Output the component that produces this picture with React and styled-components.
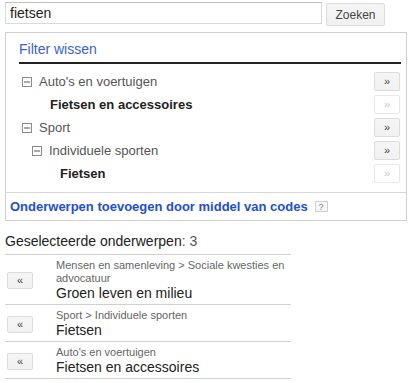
import styled, { createGlobalStyle } from "styled-components";

const GlobalStyle = createGlobalStyle`
  body {
    margin: 0;
    background: #fff;
    font-family: Arial, "Liberation Sans", sans-serif;
    color: #222;
  }
`;

const Page = styled.div`
  padding: 2px 6px 0 5px;
  width: 402px;
`;

const SearchRow = styled.div`
  display: flex;
  align-items: flex-start;
  gap: 4px;
`;

const SearchInput = styled.input`
  box-sizing: border-box;
  width: 317px;
  height: 22px;
  margin: 0;
  padding: 0 4px;
  border: 1px solid #d9d9d9;
  border-top-color: #c0c0c0;
  font: 14px Arial, "Liberation Sans", sans-serif;
  color: #222;
  outline: none;
`;

const Button = styled.button`
  box-sizing: border-box;
  width: ${(p) => p.$w || 26}px;
  height: ${(p) => p.$h || 19}px;
  margin: 0;
  padding: 0;
  border: 1px solid ${(p) => (p.$off ? "#e8e8e8" : "#dcdcdc")};
  border-radius: 2px;
  background: ${(p) => (p.$off ? "#fff" : "linear-gradient(#f5f5f5, #f1f1f1)")};
  color: ${(p) => (p.$off ? "#c8c8c8" : "#444")};
  font: ${(p) => p.$fs || 12}px Arial, "Liberation Sans", sans-serif;
  line-height: 1;
  cursor: default;
  flex-shrink: 0;
`;

const SearchButton = styled(Button)`
  margin-top: 1px;
`;

const FilterBox = styled.div`
  margin-top: 6px;
  border: 1px solid #cfcfcf;
`;

const FilterHeader = styled.div`
  margin: 0 5px 0 13px;
  padding: 7px 0 4px;
  border-bottom: 2px solid #222;
`;

const Link = styled.a`
  color: ${(p) => (p.$bold ? "#1d4fd1" : "#3a5fd9")};
  font-size: ${(p) => p.$size}px;
  font-weight: ${(p) => (p.$bold ? "bold" : "normal")};
  text-decoration: none;
  line-height: 16px;
`;

const Tree = styled.div`
  padding: 6px 6px 7px 16px;
  border-bottom: 1px solid #d6d6d6;
`;

const TreeRow = styled.div`
  display: flex;
  align-items: center;
  height: 23px;
  padding-left: ${(p) => p.$indent}px;
`;

const TreeLabel = styled.span`
  flex: 1;
  font-size: 13px;
  color: ${(p) => (p.$leaf ? "#222" : "#555")};
  font-weight: ${(p) => (p.$leaf ? "bold" : "normal")};
`;

const Toggle = styled.svg`
  width: 10px;
  height: 10px;
  margin-right: 7px;
  flex-shrink: 0;
`;

const CodesRow = styled.div`
  display: flex;
  align-items: center;
  height: 27px;
  padding-left: 4px;
  gap: 7px;
`;

const Help = styled.span`
  box-sizing: border-box;
  display: inline-flex;
  align-items: center;
  justify-content: center;
  width: 13px;
  height: 11px;
  border: 1px solid #d0d0d0;
  background: #f6f6f6;
  color: #888;
  font-size: 9px;
`;

const Heading = styled.div`
  margin-top: 12px;
  font-size: 14px;
  line-height: 16px;
  color: #222;
  span {
    color: #555;
  }
`;

const SelectedList = styled.div`
  width: 286px;
  margin-top: 5px;
  border-top: 1px solid #d0d0d0;
`;

const SelectedRow = styled.div`
  display: flex;
  align-items: center;
  gap: 23px;
  padding: 4px 0 2px 2px;
  border-bottom: 1px solid #d0d0d0;
`;

const SelectedText = styled.div`
  flex: 1;
`;

const Path = styled.div`
  font-size: 11px;
  line-height: 13px;
  color: #666;
`;

const Name = styled.div`
  font-size: 14px;
  line-height: 17px;
  color: #222;
`;

const MinusBox = () => (
  <Toggle viewBox="0 0 10 10">
    <rect x="0.5" y="0.5" width="9" height="9" fill="#fff" stroke="#8a8a8a" />
    <line x1="2" y1="5" x2="8" y2="5" stroke="#555" />
  </Toggle>
);

const tree = [
  { label: "Auto's en voertuigen", indent: 0 },
  { label: "Fietsen en accessoires", indent: 28, leaf: true },
  { label: "Sport", indent: 0 },
  { label: "Individuele sporten", indent: 10 },
  { label: "Fietsen", indent: 38, leaf: true },
];

const selected = [
  { path: "Mensen en samenleving > Sociale kwesties en advocatuur", name: "Groen leven en milieu" },
  { path: "Sport > Individuele sporten", name: "Fietsen" },
  { path: "Auto's en voertuigen", name: "Fietsen en accessoires" },
];

export default function App() {
  return (
    <Page>
      <GlobalStyle />
      <SearchRow>
        <SearchInput defaultValue="fietsen" />
        <SearchButton $w={59} $h={23}>Zoeken</SearchButton>
      </SearchRow>
      <FilterBox>
        <FilterHeader>
          <Link $size={14}>Filter wissen</Link>
        </FilterHeader>
        <Tree>
          {tree.map((t) => (
            <TreeRow key={t.label + t.indent} $indent={t.indent}>
              {!t.leaf && <MinusBox />}
              <TreeLabel $leaf={t.leaf}>{t.label}</TreeLabel>
              <Button $off={t.leaf} $fs={11}>»</Button>
            </TreeRow>
          ))}
        </Tree>
        <CodesRow>
          <Link $size={13} $bold>Onderwerpen toevoegen door middel van codes</Link>
          <Help>?</Help>
        </CodesRow>
      </FilterBox>
      <Heading>
        Geselecteerde onderwerpen<span>: 3</span>
      </Heading>
      <SelectedList>
        {selected.map((s) => (
          <SelectedRow key={s.path}>
            <Button $h={17} $fs={11}>«</Button>
            <SelectedText>
              <Path>{s.path}</Path>
              <Name>{s.name}</Name>
            </SelectedText>
          </SelectedRow>
        ))}
      </SelectedList>
    </Page>
  );
}
